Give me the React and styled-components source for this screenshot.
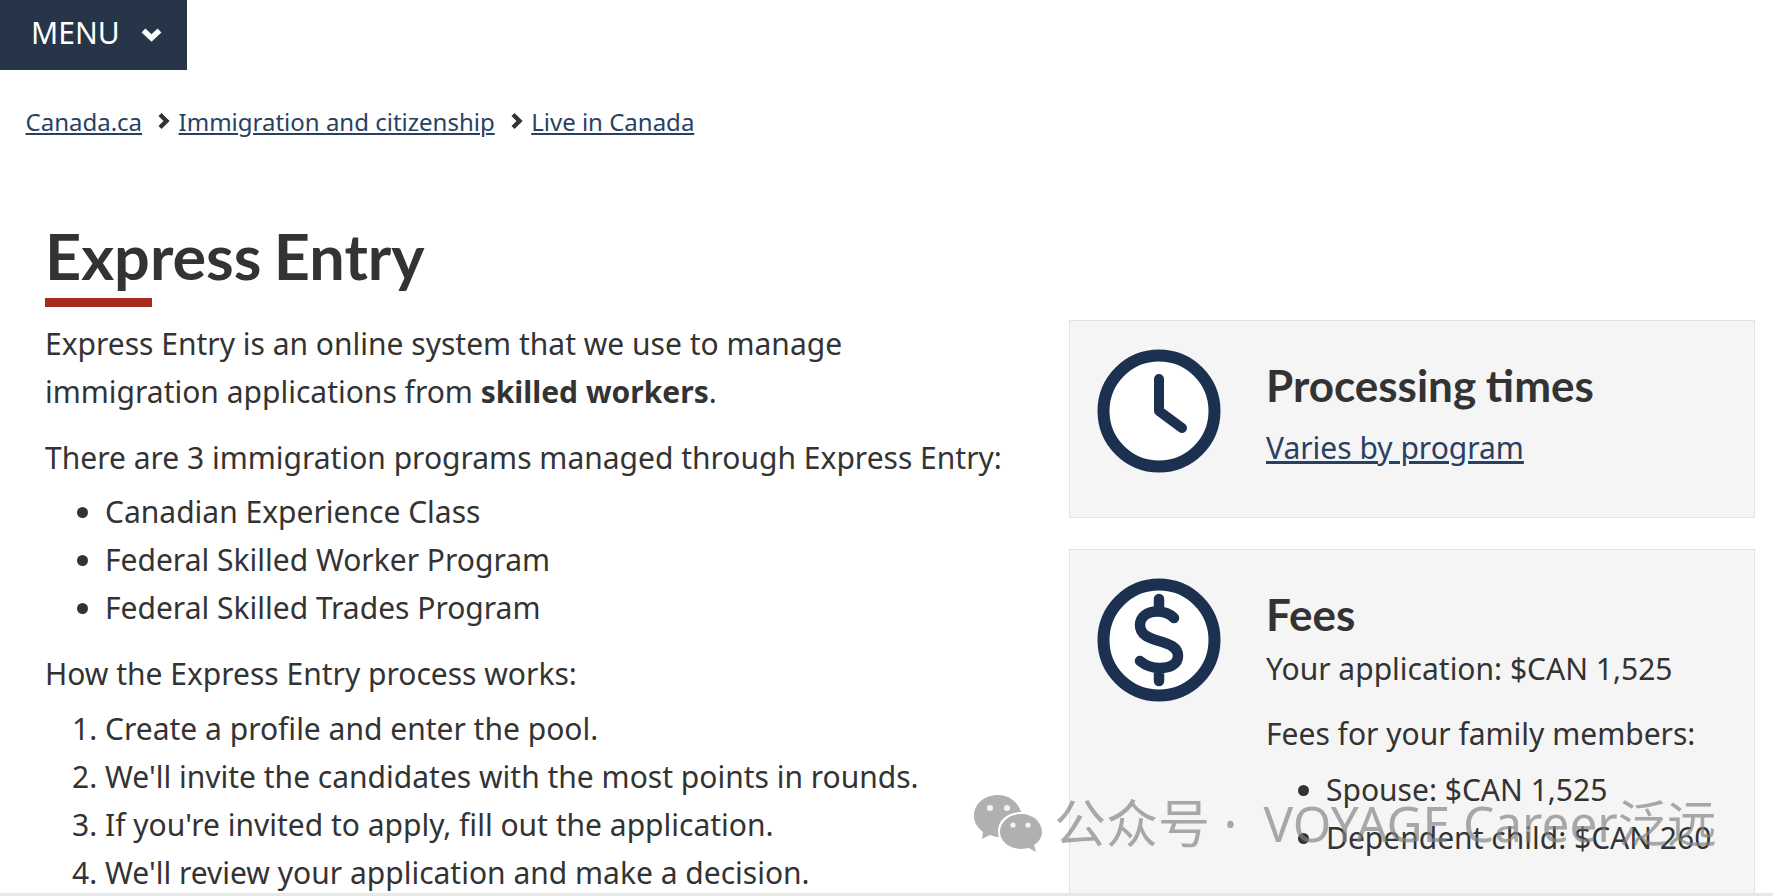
import React from 'react';
import styled, { createGlobalStyle } from 'styled-components';

const GlobalStyle = createGlobalStyle`
  html, body {
    margin: 0;
    height: 896px;
    overflow: hidden;
    background: #fff;
    font-family: "Noto Sans", "Open Sans", sans-serif;
    color: #333;
  }
`;

const Page = styled.div`
  position: relative;
  height: 896px;
  overflow: hidden;
  box-sizing: border-box;
  border-bottom: 3px solid #e8e8e8;
`;

const MenuButton = styled.button`
  display: flex;
  align-items: center;
  gap: 21px;
  width: 187px;
  height: 70px;
  padding: 0 0 5px 31px;
  border: none;
  background: #263648;
  color: #fff;
  font-family: inherit;
  font-size: 30px;
`;

const MenuChevron = styled.svg`
  width: 21px;
  height: 15px;
  margin-top: 3px;
`;

const Breadcrumbs = styled.nav`
  display: flex;
  align-items: center;
  height: 34px;
  margin: 34px 0 0 25.5px;
  font-size: 24px;
`;

const Crumb = styled.a`
  color: #284162;
  text-decoration: underline;
`;

const CrumbArrow = styled.svg`
  width: 13px;
  height: 18px;
  margin: 0 8.5px 0 15px;
`;

const Columns = styled.div`
  display: grid;
  grid-template-columns: 1024px 686px;
  margin: 82px 0 0 45px;
`;

const Main = styled.main``;

const Title = styled.h1`
  margin: 0;
  font-family: Lato, sans-serif;
  font-size: 63px;
  font-weight: 700;
  word-spacing: -3px;
  line-height: 72px;

  &::after {
    content: '';
    display: block;
    width: 107px;
    height: 9px;
    margin-top: 6px;
    background: #a62a1e;
  }
`;

const Para = styled.p`
  margin: 0 0 ${(p) => p.$after}px;
  font-size: 30px;
  line-height: 48px;
`;

const Intro = styled(Para)`
  margin-top: 13px;
`;

const List = styled.ul`
  margin: 0 0 18px;
  padding: 0 0 0 60px;
  font-size: 30px;
  line-height: 48px;
`;

const Steps = styled(List).attrs({ as: 'ol' })``;

const Side = styled.aside`
  display: flex;
  flex-direction: column;
  gap: 31px;
  padding-top: 100px;
`;

const Panel = styled.section`
  display: flex;
  box-sizing: border-box;
  height: ${(p) => p.$height}px;
  padding: 28px 0 0 27px;
  background: #f5f5f5;
  border: 1px solid #e3e3e3;
`;

const PanelIcon = styled.svg`
  flex: none;
  width: 124px;
  height: 124px;
`;

const PanelBody = styled.div`
  margin-left: 45px;
  padding-top: 10px;
`;

const PanelTitle = styled.h2`
  margin: 0;
  font-family: Lato, sans-serif;
  font-size: 44px;
  font-weight: 700;
  word-spacing: -1px;
  line-height: 52px;
`;

const PanelLink = styled.a`
  display: block;
  margin-top: 13px;
  color: #284162;
  font-size: 30px;
  line-height: 48px;
  text-decoration: underline;
`;

const PanelText = styled.p`
  margin: ${(p) => p.$before || 0}px 0 ${(p) => p.$after}px;
  font-size: 30px;
  line-height: 48px;
`;

const Watermark = styled.div`
  position: absolute;
  left: 974px;
  top: 791px;
  display: flex;
  align-items: center;
  gap: 10px;
  color: rgba(130, 130, 130, 0.68);
  font-family: "Noto Sans", "Noto Sans CJK SC", sans-serif;
  font-size: 52px;
  line-height: 64px;
  white-space: nowrap;
`;

const WatermarkBrand = styled.span`
  margin-left: 16px;
  font-size: 49.5px;
`;

const WechatIcon = styled.svg`
  width: 70px;
  height: 58px;
`;

function Chevron() {
  return (
    <CrumbArrow viewBox="0 0 13 18">
      <path d="M3 2.5 L9.5 9 L3 15.5" fill="none" stroke="#333" strokeWidth="4.4" />
    </CrumbArrow>
  );
}

function App() {
  return (
    <Page>
      <GlobalStyle />
      <MenuButton>
        MENU
        <MenuChevron viewBox="0 0 21 15">
          <path d="M2.5 3.5 L10.5 11 L18.5 3.5" fill="none" stroke="#fff" strokeWidth="5.5" />
        </MenuChevron>
      </MenuButton>
      <Breadcrumbs>
        <Crumb>Canada.ca</Crumb>
        <Chevron />
        <Crumb>Immigration and citizenship</Crumb>
        <Chevron />
        <Crumb>Live in Canada</Crumb>
      </Breadcrumbs>
      <Columns>
        <Main>
          <Title>Express Entry</Title>
          <Intro $after={18}>
            Express Entry is an online system that we use to manage
            <br />
            immigration applications from <strong>skilled workers</strong>.
          </Intro>
          <Para $after={6}>There are 3 immigration programs managed through Express Entry:</Para>
          <List>
            <li>Canadian Experience Class</li>
            <li>Federal Skilled Worker Program</li>
            <li>Federal Skilled Trades Program</li>
          </List>
          <Para $after={7}>How the Express Entry process works:</Para>
          <Steps>
            <li>Create a profile and enter the pool.</li>
            <li>We'll invite the candidates with the most points in rounds.</li>
            <li>If you're invited to apply, fill out the application.</li>
            <li>We'll review your application and make a decision.</li>
          </Steps>
        </Main>
        <Side>
          <Panel $height={198}>
            <PanelIcon viewBox="0 0 124 124">
              <circle cx="62" cy="62" r="55.5" fill="#fff" stroke="#1c3050" strokeWidth="12" />
              <path d="M62 30 V62 L85 79" fill="none" stroke="#1c3050" strokeWidth="10" strokeLinecap="round" strokeLinejoin="round" />
            </PanelIcon>
            <PanelBody>
              <PanelTitle>Processing times</PanelTitle>
              <PanelLink>Varies by program</PanelLink>
            </PanelBody>
          </Panel>
          <Panel $height={400}>
            <PanelIcon viewBox="0 0 124 124">
              <circle cx="62" cy="62" r="55.5" fill="#fff" stroke="#1c3050" strokeWidth="12" />
              <path d="M77 40 C72 35 66 33.5 60 33.5 C50 33.5 43 39 43 47 C43 57 52 60 62 63 C72 66 81 69 81 78 C81 86 73 90 63 90 C55 90 48 87 43 83 M62 21 V33 M62 91 V103" fill="none" stroke="#1c3050" strokeWidth="10.5" strokeLinecap="round" />
            </PanelIcon>
            <PanelBody>
              <PanelTitle>Fees</PanelTitle>
              <PanelText $before={5} $after={17}>Your application: $CAN 1,525</PanelText>
              <PanelText $after={8}>Fees for your family members:</PanelText>
              <List>
                <li>Spouse: $CAN 1,525</li>
                <li>Dependent child: $CAN 260</li>
              </List>
            </PanelBody>
          </Panel>
        </Side>
      </Columns>
      <Watermark>
        <WechatIcon viewBox="0 0 70 58">
          <path d="M24 1 C10 1 0 10 0 22 C0 29 4 34 9 38 L8 45 L16 41 C19 42 22 43 25 43 C24 41 24 39 24 37 C24 26 34 18 47 18 C44 8 35 1 24 1 Z" fill="#b0b0b0" />
          <path d="M47 20 C35 20 26 28 26 38 C26 47 35 55 47 55 C50 55 52 54 55 54 L62 58 L60 51 C65 48 68 43 68 38 C68 28 59 20 47 20 Z" fill="#b0b0b0" />
          <circle cx="16" cy="14" r="3" fill="#f4f4f4" />
          <circle cx="33" cy="14" r="3" fill="#f4f4f4" />
          <circle cx="39" cy="31" r="2.6" fill="#f4f4f4" />
          <circle cx="54" cy="31" r="2.6" fill="#f4f4f4" />
        </WechatIcon>
        <span>公众号 ·</span>
        <WatermarkBrand>VOYAGE Career泛远</WatermarkBrand>
      </Watermark>
    </Page>
  );
}

export default App;
